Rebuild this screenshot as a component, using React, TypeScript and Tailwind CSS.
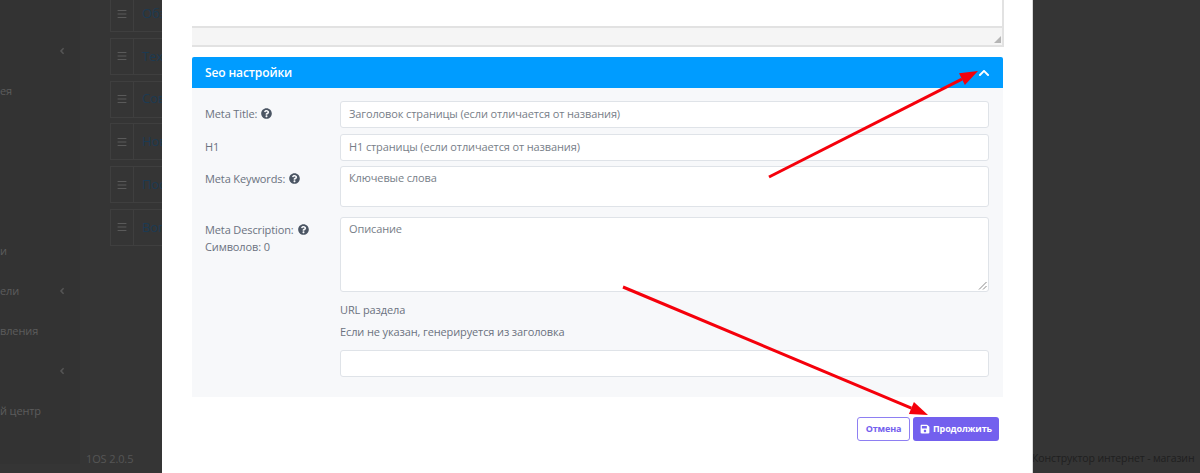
import { FaAngleLeft, FaChevronUp, FaQuestionCircle, FaSave } from 'react-icons/fa';
import { Menu } from 'lucide-react';

const sideRows = [
  { label: '', chevron: false },
  { label: '', chevron: true },
  { label: 'ея', chevron: false },
  { label: '', chevron: false },
  { label: '', chevron: false },
  { label: '', chevron: false },
  { label: 'и', chevron: false },
  { label: 'ели', chevron: true },
  { label: 'вления', chevron: false },
  { label: '', chevron: true },
  { label: 'й центр', chevron: false },
];

const listRows = ['Обз', 'Техн', 'Сов', 'Нов', 'Пос', 'Воп'];

function Help() {
  return <FaQuestionCircle className="inline-block ml-1 text-[11px] text-[#4b5563] align-[-1px]" />;
}

function Arrow({ x1, y1, x2, y2 }: { x1: number; y1: number; x2: number; y2: number }) {
  // head is built along the line so both arrows share one shape
  const len = Math.hypot(x2 - x1, y2 - y1);
  const ux = (x2 - x1) / len;
  const uy = (y2 - y1) / len;
  const bx = x2 - ux * 18;
  const by = y2 - uy * 18;
  const head = `${x2},${y2} ${bx - uy * 6.5},${by + ux * 6.5} ${bx + uy * 6.5},${by - ux * 6.5}`;
  return (
    <>
      <line x1={x1} y1={y1} x2={bx} y2={by} stroke="#f5000b" strokeWidth="3" />
      <polygon points={head} fill="#f5000b" />
    </>
  );
}

export default function App() {
  return (
    <div className="relative w-[1200px] h-[473px] overflow-hidden bg-[#353535] text-[11px] tracking-[-0.12px] font-['Open_Sans',sans-serif]">
      {/* page behind the overlay */}
      <div className="flex h-full">
        <div className="w-[80px] shrink-0 h-full bg-[#333333] -mt-[9px] text-[#5c5c5c]">
          {sideRows.map((row, i) => (
            <div key={i} className="flex h-10 items-center justify-between pr-[13px]">
              <span>{row.label}</span>
              {row.chevron && <FaAngleLeft className="text-[10px] text-[#555555]" />}
            </div>
          ))}
        </div>
        <div className="flex-1 flex flex-col">
          <div className="pl-[30px] -mt-[5px] flex flex-col gap-[5.75px]">
            {listRows.map((name) => (
              <div key={name} className="flex h-[37px] w-[400px] border border-[#3f3f3f]">
                <div className="w-[23px] flex items-center justify-center border-r border-[#3f3f3f]">
                  <Menu className="w-[12px] h-[12px] text-[#5a5a5a]" />
                </div>
                <div className="pl-[8px] flex items-center text-[13px] text-[#1c3a52]">{name}</div>
              </div>
            ))}
          </div>
          <div className="mt-auto pl-[6px] pb-[6px] text-[11px] text-[#565656]">1OS 2.0.5</div>
        </div>
      </div>
      <div className="absolute left-[1032px] top-[451px] whitespace-nowrap text-[10.5px] text-[#1f1f1f]">
        Конструктор интернет - магазин
      </div>

      {/* modal */}
      <div className="absolute left-[162px] top-0 w-[871px] h-full bg-white pl-[30px] border-r border-[#d9d9d9]">
        <div className="w-[812px] h-[47px] border-r-2 border-b-2 border-[#e2e2e2] flex flex-col">
          <div className="h-[28px] border-b-2 border-[#e2e2e2]" />
          <div className="flex-1 bg-[#f5f5f5] flex justify-end items-end pr-[1px] pb-[2px]">
            <svg width="7" height="7" viewBox="0 0 7 7">
              <polygon points="7,0 7,7 0,7" fill="#b5b5b5" />
            </svg>
          </div>
        </div>

        <div className="mt-[10px] w-[811px]">
          <div className="h-[31px] bg-[#009cff] rounded-t-[2px] flex items-center justify-between pl-[13px] pr-[13px]">
            <span className="text-[12px] font-semibold text-white">Seo настройки</span>
            <FaChevronUp className="text-[12px] text-white" />
          </div>
          <div className="h-[309px] bg-[#f7f8fa] pl-[13px] pt-[13px] text-[#6b7280]">
            <div className="grid grid-cols-[135px_649px]">
              <div className="pt-[5px]">Meta Title:<Help /></div>
              <div className="h-[27px] bg-white border border-[#dfe3e8] rounded-[3px] px-[8px] flex items-center text-[#777e88]">
                Заголовок страницы (если отличается от названия)
              </div>

              <div className="mt-[6px] pt-[5px]">H1</div>
              <div className="mt-[6px] h-[27px] bg-white border border-[#dfe3e8] rounded-[3px] px-[8px] flex items-center text-[#777e88]">
                H1 страницы (если отличается от названия)
              </div>

              <div className="mt-[5px] pt-[5px]">Meta Keywords:<Help /></div>
              <div className="mt-[5px] h-[41px] bg-white border border-[#dfe3e8] rounded-[3px] px-[8px] pt-[3px] text-[#777e88]">
                Ключевые слова
              </div>

              <div className="mt-[10px] pt-[4px] leading-[17px]">
                Meta Description:<Help />
                <br />
                Символов: 0
              </div>
              <div className="relative mt-[10px] h-[75px] bg-white border border-[#dfe3e8] rounded-[3px] px-[8px] pt-[3px] text-[#777e88]">
                Описание
                <svg className="absolute right-[1px] bottom-[1px]" width="9" height="9" viewBox="0 0 9 9">
                  <path d="M8.5 1 L1 8.5 M8.5 5 L5 8.5" stroke="#8a8a8a" strokeWidth="1" />
                </svg>
              </div>

              <div className="col-start-2 mt-[10px] h-[16px] leading-[16px]">URL раздела</div>
              <div className="col-start-2 mt-[6px] h-[16px] leading-[16px]">Если не указан, генерируется из заголовка</div>
              <div className="col-start-2 mt-[10px] h-[27px] bg-white border border-[#dfe3e8] rounded-[3px]" />
            </div>
          </div>
        </div>

        <div className="mt-[20px] w-[807px] flex justify-end gap-[3px] text-[9px] font-bold">
          <button className="w-[53px] h-[24px] rounded-[3px] border border-[#8e7ff2] bg-white text-[#7360ee]">Отмена</button>
          <button className="w-[86px] h-[24px] rounded-[3px] bg-[#7360ee] text-white flex items-center justify-center gap-[3px]">
            <FaSave className="text-[10px]" />
            Продолжить
          </button>
        </div>
      </div>

      {/* annotation arrows */}
      <svg className="absolute left-0 top-0 pointer-events-none" width="1200" height="473">
        <Arrow x1={769} y1={177} x2={978} y2={71} />
        <Arrow x1={623} y1={287} x2={928} y2={415} />
      </svg>
    </div>
  );
}
